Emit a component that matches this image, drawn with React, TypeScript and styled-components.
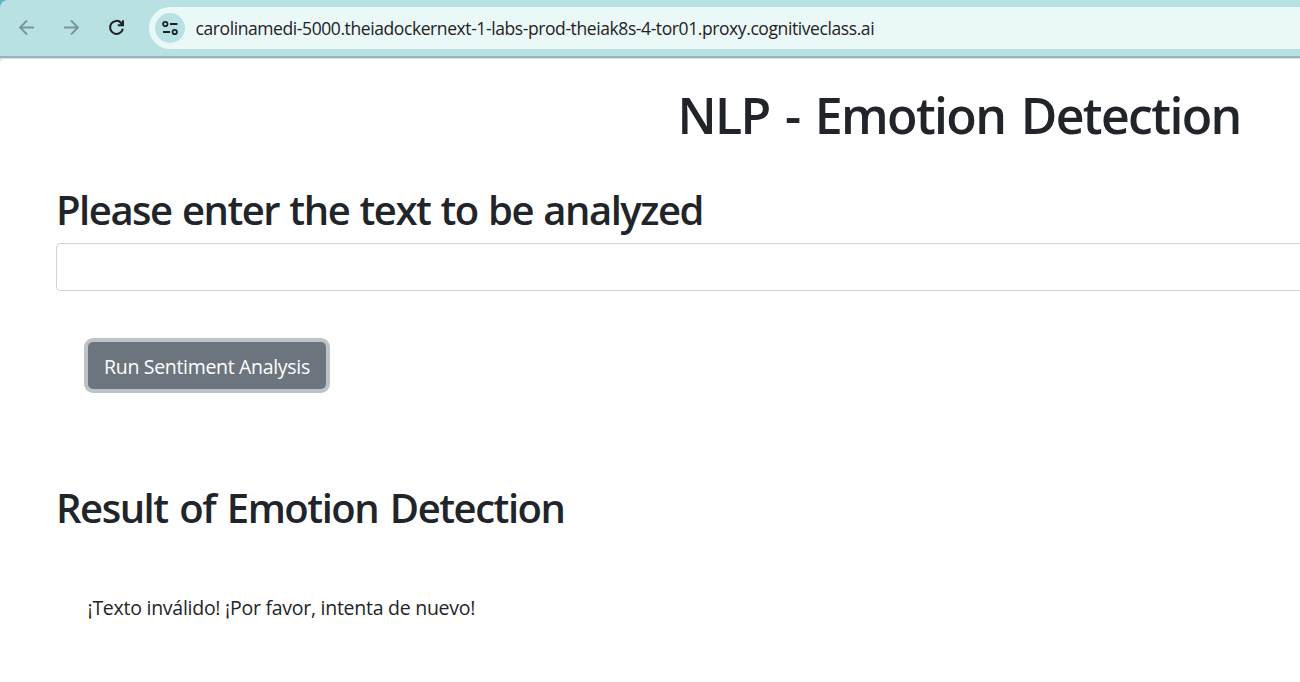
import React from "react";
import styled, { createGlobalStyle } from "styled-components";

const GlobalStyle = createGlobalStyle`
  * { box-sizing: border-box; }
  body { margin: 0; background: #fff; overflow: hidden; }
`;

const Window = styled.div`
  width: 100%;
  height: 682px;
  overflow: hidden;
  display: flex;
  flex-direction: column;
  background: linear-gradient(#5bb6c2 0 20px, #dcdfdf 20px);
  font-family: "Open Sans", "Noto Sans", sans-serif;
  color: #212529;
`;

const Toolbar = styled.header`
  flex: none;
  height: 58px;
  display: flex;
  align-items: flex-start;
  padding: 7px 0 0 17px;
  background: #b8e1e4;
  border-top-left-radius: 8px;
  border-bottom: 2px solid #95b5b7;
`;

const NavButtons = styled.nav`
  display: flex;
  gap: 25px;
  padding-top: 11px;
  width: 132px;
`;

const NavIcon = styled.svg<{ $muted?: boolean }>`
  flex: none;
  width: 20px;
  height: 20px;
  fill: none;
  stroke: ${(p) => (p.$muted ? "#789698" : "#1f2223")};
  stroke-width: ${(p) => (p.$muted ? 1.8 : 2)};
`;

const AddressBar = styled.div`
  flex: 1;
  height: 42px;
  display: flex;
  align-items: center;
  gap: 10.5px;
  padding-left: 6px;
  border-radius: 21px 0 0 21px;
  background: #ebf8f8;
`;

const SiteInfo = styled.span`
  flex: none;
  width: 30px;
  height: 30px;
  display: grid;
  place-items: center;
  border-radius: 50%;
  background: #b8e1e4;
`;

const Url = styled.span`
  font-size: 17.5px;
  line-height: 24px;
  letter-spacing: -0.41px;
  white-space: nowrap;
  color: #1f2223;
`;

const Page = styled.main`
  flex: 1;
  padding: 26px 0 0 56px;
  background: #fff;
  border-top: 1px solid #dcdfdf;
  border-top-left-radius: 5px;
`;

const Title = styled.h1`
  margin: 0 0 41px 621.5px;
  font-size: 50px;
  font-weight: 600;
  line-height: 60px;
  letter-spacing: -1.65px;
  word-spacing: 4px;
  white-space: nowrap;
`;

const Heading = styled.h2<{ $wordGap: number }>`
  margin: 0;
  font-size: 40px;
  font-weight: 600;
  line-height: 48px;
  letter-spacing: -1.47px;
  word-spacing: ${(p) => p.$wordGap}px;
  white-space: nowrap;
`;

const TextField = styled.input`
  display: block;
  width: 100%;
  height: 48px;
  margin: 9px 0 51px;
  padding: 8px 15px;
  border: 1px solid #ced4da;
  border-right: 0;
  border-radius: 5px 0 0 5px;
  background: #fff;
  font: inherit;
  font-size: 20px;
  outline: none;
`;

const RunButton = styled.button`
  display: block;
  width: 238px;
  height: 47px;
  margin: 0 0 95px 32px;
  padding: 2px 0 0;
  border: 0;
  border-radius: 5px;
  background: #6c757d;
  box-shadow: 0 0 0 4px #bfc3c7;
  color: #fff;
  font-family: inherit;
  font-size: 19.5px;
  line-height: 30px;
  letter-spacing: -0.32px;
  white-space: nowrap;
`;

const Message = styled.p`
  margin: 61px 0 0 31.5px;
  font-size: 19.5px;
  line-height: 30px;
  letter-spacing: -0.26px;
  white-space: nowrap;
`;

export default function App() {
  return (
    <Window>
      <GlobalStyle />
      <Toolbar>
        <NavButtons>
          <NavIcon $muted viewBox="0 0 20 20">
            <path d="M17 9.5H3M10 2.5L3 9.5L10 16.5" />
          </NavIcon>
          <NavIcon $muted viewBox="0 0 20 20">
            <path d="M2 9.5H16M9 2.5L16 9.5L9 16.5" />
          </NavIcon>
          <NavIcon viewBox="0 0 20 20">
            <path d="M14.2 4.8A6.5 6.5 0 1 0 15.9 10.8M16 2.3V7.3H10.8M15.7 6.8L12.6 3.8" />
          </NavIcon>
        </NavButtons>
        <AddressBar>
          <SiteInfo>
            <svg width="16" height="16" viewBox="0 0 16 16" fill="none" stroke="#1f2223" strokeWidth="1.8">
              <circle cx="3.3" cy="4" r="2.2" />
              <path d="M8 4H15.4M1 12H8" />
              <circle cx="12.7" cy="12" r="2.2" />
            </svg>
          </SiteInfo>
          <Url>carolinamedi-5000.theiadockernext-1-labs-prod-theiak8s-4-tor01.proxy.cognitiveclass.ai</Url>
        </AddressBar>
      </Toolbar>
      <Page>
        <Title>NLP - Emotion Detection</Title>
        <Heading $wordGap={1.3}>Please enter the text to be analyzed</Heading>
        <TextField type="text" aria-label="Text to be analyzed" />
        <RunButton type="button">Run Sentiment Analysis</RunButton>
        <Heading $wordGap={2.7}>Result of Emotion Detection</Heading>
        <Message>¡Texto inválido! ¡Por favor, intenta de nuevo!</Message>
      </Page>
    </Window>
  );
}
